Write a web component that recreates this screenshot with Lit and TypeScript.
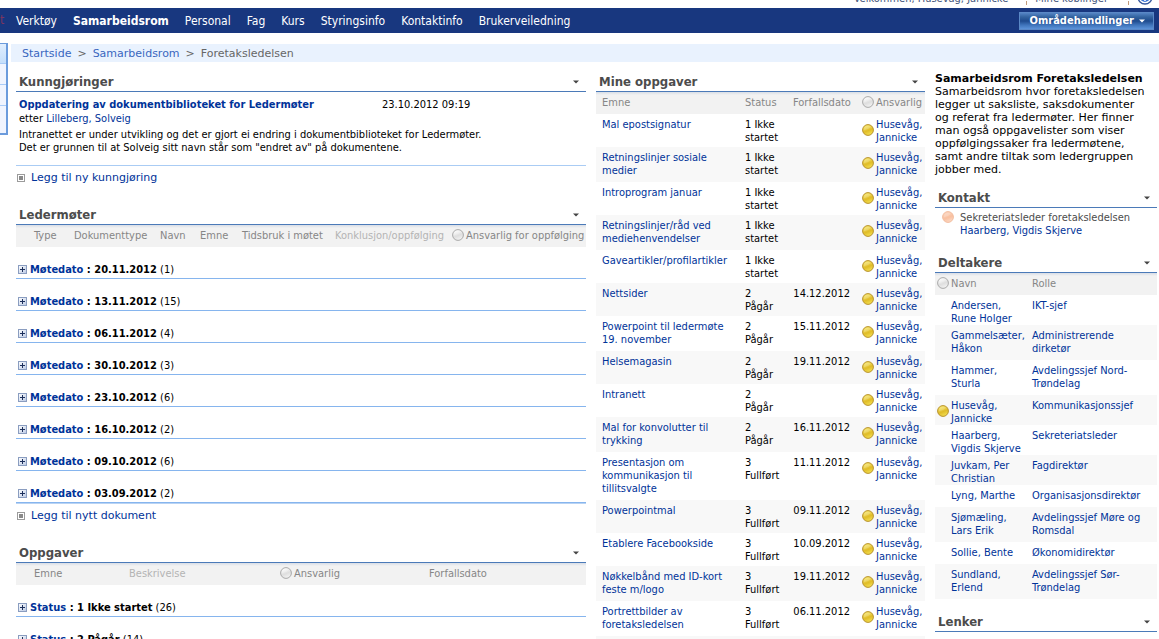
import { LitElement, html, svg, css, nothing } from "lit";
import { classMap } from "lit/directives/class-map.js";

type Tone = "gray" | "gold" | "peach";
interface Task { title: string; status: string; due?: string; }
interface Member { name: string; role: string; online?: boolean; }
interface Column { label?: string; width: number; muted?: boolean; person?: boolean; }

const NAV = ["Verktøy", "Samarbeidsrom", "Personal", "Fag", "Kurs", "Styringsinfo", "Kontaktinfo", "Brukerveiledning"];

const MEETINGS: [string, number][] = [
  ["20.11.2012", 1], ["13.11.2012", 15], ["06.11.2012", 4], ["30.10.2012", 3],
  ["23.10.2012", 6], ["16.10.2012", 2], ["09.10.2012", 6], ["03.09.2012", 2],
];
const STATUSES: [string, number][] = [["1 Ikke startet", 26], ["2 Pågår", 14]];

const MEETING_COLUMNS: Column[] = [
  { width: 12 }, { label: "Type", width: 40 }, { label: "Dokumenttype", width: 86 },
  { label: "Navn", width: 40 }, { label: "Emne", width: 42 }, { label: "Tidsbruk i møtet", width: 93 },
  { label: "Konklusjon/oppfølging", width: 117, muted: true },
  { label: "Ansvarlig for oppfølging", width: 140, person: true },
];
const TASK_COLUMNS: Column[] = [
  { width: 12 }, { label: "Emne", width: 95 }, { label: "Beskrivelse", width: 151, muted: true },
  { label: "Ansvarlig", width: 149, person: true }, { label: "Forfallsdato", width: 163 },
];

const NOT_STARTED = "1 Ikke\nstartet";
const RUNNING = "2\nPågår";
const DONE = "3\nFullført";
const MY_TASKS: Task[] = [
  { title: "Mal epostsignatur", status: NOT_STARTED },
  { title: "Retningslinjer sosiale\nmedier", status: NOT_STARTED },
  { title: "Introprogram januar", status: NOT_STARTED },
  { title: "Retningslinjer/råd ved\nmediehenvendelser", status: NOT_STARTED },
  { title: "Gaveartikler/profilartikler", status: NOT_STARTED },
  { title: "Nettsider", status: RUNNING, due: "14.12.2012" },
  { title: "Powerpoint til ledermøte\n19. november", status: RUNNING, due: "15.11.2012" },
  { title: "Helsemagasin", status: RUNNING, due: "19.11.2012" },
  { title: "Intranett", status: RUNNING },
  { title: "Mal for konvolutter til\ntrykking", status: RUNNING, due: "16.11.2012" },
  { title: "Presentasjon om\nkommunikasjon til\ntillitsvalgte", status: DONE, due: "11.11.2012" },
  { title: "Powerpointmal", status: DONE, due: "09.11.2012" },
  { title: "Etablere Facebookside", status: DONE, due: "10.09.2012" },
  { title: "Nøkkelbånd med ID-kort\nfeste m/logo", status: DONE, due: "19.11.2012" },
  { title: "Portrettbilder av\nforetaksledelsen", status: DONE, due: "06.11.2012" },
];
const MEMBERS: Member[] = [
  { name: "Andersen,\nRune Holger", role: "IKT-sjef" },
  { name: "Gammelsæter,\nHåkon", role: "Administrerende\ndirketør" },
  { name: "Hammer,\nSturla", role: "Avdelingssjef Nord-\nTrøndelag" },
  { name: "Husevåg,\nJannicke", role: "Kommunikasjonssjef", online: true },
  { name: "Haarberg,\nVigdis Skjerve", role: "Sekreteriatsleder" },
  { name: "Juvkam, Per\nChristian", role: "Fagdirektør" },
  { name: "Lyng, Marthe", role: "Organisasjonsdirektør" },
  { name: "Sjømæling,\nLars Erik", role: "Avdelingssjef Møre og\nRomsdal" },
  { name: "Sollie, Bente", role: "Økonomidirektør" },
  { name: "Sundland,\nErlend", role: "Avdelingssjef Sør-\nTrøndelag" },
];

const presence = (tone: Tone) => {
  const [edge, top, mid, low] = {
    gray: ["#a9a9a9", "#fafafa", "#dedede", "#f6f6f6"],
    gold: ["#b8922c", "#f6e468", "#e0bc28", "#f6e454"],
    peach: ["#f2bc9e", "#fbd3bb", "#f9c0a0", "#fcdcc9"],
  }[tone];
  return html`<svg class="presence" width="12" height="12" viewBox="0 0 12 12" aria-hidden="true">
    ${svg`<defs><linearGradient id="fill" x1="0.3" y1="0" x2="0.7" y2="1">
      <stop offset="0.1" stop-color=${top}/><stop offset="0.55" stop-color=${mid}/><stop offset="1" stop-color=${low}/>
    </linearGradient></defs>
    <circle cx="6" cy="6" r="5.4" fill="url(#fill)" stroke=${edge} stroke-width="1"/>
    <path d="M1.8 6.2A4.2 4.2 0 0 1 8.8 2.9Q6.5 5.6 1.8 6.2Z" fill="#fff" opacity="0.18"/>`}
  </svg>`;
};

const base = css`
  * { box-sizing: border-box; }
  a { color: #003399; text-decoration: none; }
  button { font: inherit; color: inherit; background: none; border: 0; padding: 0; margin: 0; cursor: pointer; }
  svg { display: block; flex: none; }
`;

class PresenceDot extends LitElement {
  static properties = { tone: { type: String } };
  tone: Tone = "gray";
  static styles = [base, css`:host { display: block; flex: none; height: 14px; width: 12px; }`];
  render() { return presence(this.tone); }
}
customElements.define("presence-dot", PresenceDot);

class PartTitle extends LitElement {
  static properties = { label: { type: String } };
  label = "";
  static styles = [base, css`
    :host { display: block; }
    .bar {
      display: flex; align-items: center; justify-content: space-between;
      height: 18px; padding: 0 7px 2px 3px; border-bottom: 1px solid #4b7ab8;
    }
    h2 { margin: 0; font-size: 13px; line-height: 15px; font-weight: bold; color: #4c4c4c; }
  `];
  render() {
    return html`<div class="bar"><h2>${this.label}</h2>
      <button type="button" aria-label="Meny">
        <svg width="6" height="4" viewBox="0 0 6 4"><path d="M0 0.5H6L3 3.5Z" fill="#444"/></svg>
      </button></div>`;
  }
}
customElements.define("part-title", PartTitle);

class AppRoot extends LitElement {
  static styles = [base, css`
    :host {
      display: block; height: 100vh; overflow: hidden; background: #fff; color: #000;
      font-family: "DejaVu Sans Condensed", "DejaVu Sans", sans-serif; font-size: 11px; line-height: 13px;
    }
    .wide { font-family: "DejaVu Sans", sans-serif; }

    .top {
      display: flex; justify-content: flex-end; align-items: flex-end; gap: 8px;
      height: 8px; padding: 0 6px 3px 0; overflow: hidden; color: #44557c;
    }
    .top a { color: inherit; white-space: nowrap; }
    .top .sep { width: 1px; height: 4px; background: #c29a7a; }
    .top .pad { width: 2px; }
    .top .wider { width: 4px; }

    .nav { display: flex; align-items: center; height: 25px; background: #18377f; color: #fff; font-size: 12px; line-height: 15px; }
    .nav .cut { width: 16px; color: #7d3560; }
    .nav ul { display: flex; gap: 16px; flex: 1; margin: 0; padding: 2px 0 0; list-style: none; }
    .nav a { color: #fff; }
    .nav a.current { font-weight: bold; }
    .actions {
      display: flex; align-items: center; gap: 5px; height: 18px; padding: 0 8px 0 10px; margin-right: 5px;
      border: 1px solid #5a88c6; font-size: 11px; font-weight: bold; color: #fff;
      background: linear-gradient(#5484c4 0%, #33639f 25%, #1f4b8e 50%, #3f74bb 75%, #5c92d8 100%);
    }

    .body { display: flex; align-items: flex-start; }
    .side {
      flex: none; width: 8px; margin: 10px 3px 0 0; border: 1px solid #6b9bdc; border-width: 1px 2px 2px 0;
      background: #f0f4fe;
    }
    .side i { display: block; height: 21px; border-bottom: 1px solid #a9cbf7; }
    .side i:first-child { height: 20px; background: linear-gradient(#e0eefe, #c5dffb); }
    .side i:last-child { height: 27px; border-bottom: 0; }
    main { flex: 1; min-width: 0; padding-top: 11px; }

    .crumbs { display: flex; align-items: center; gap: 6px; height: 18px; padding-left: 11px; background: #e9f2fe; color: #666; }
    .crumbs a { color: #3966bf; }

    .columns { display: grid; grid-template-columns: 570fr 329fr 222fr; gap: 10px; padding: 12px 2px 0 5px; align-items: start; }
    .columns > * { min-width: 0; }

    .news { display: grid; grid-template-columns: 363fr 204fr; padding: 6px 0 11px 3px; border-bottom: 1px solid #aaccf4; row-gap: 1px; white-space: nowrap; }
    .news a.head { font-weight: bold; }
    .news p { grid-column: 1 / -1; margin: 0; }
    .news .text { margin: 2px 0 0; white-space: pre-line; }

    .add { display: flex; align-items: center; gap: 6px; padding-left: 1px; height: 23px; margin-bottom: 18px; }
    .add .box { width: 8px; height: 8px; border: 1px solid #9b9b9b; padding: 1px; }
    .add .box::before { content: ""; display: block; width: 4px; height: 4px; background: #8a8a8a; }

    table { width: 100%; border-collapse: collapse; table-layout: fixed; }
    th {
      height: 22px; padding: 0 0 1px 6px; text-align: left; font-weight: normal; color: #868686; white-space: nowrap;
      background: linear-gradient(#d9dee6, #e9ebee 2px, #f2f2f2 3px);
    }
    th.muted { color: #b4b4b4; }
    td { padding: 4px 0 3px 6px; vertical-align: top; white-space: pre-line; }
    tr.alt td { background: #f8f8f8; }
    .who { display: flex; align-items: center; gap: 2px; }

    .groups { margin: 0; padding: 0; list-style: none; }
    .groups li { display: flex; align-items: flex-end; height: 32px; padding: 0 0 2px 2px; border-bottom: 1px solid #86b5ee; }
    .groups.closed { border-bottom: 1px solid #b9d3f3; }
    .groups button { display: flex; align-items: center; gap: 3px; line-height: 13px; }
    .groups b { white-space: pre; }
    .groups .key { color: #003399; }

    .my th.date { padding-left: 6px; }
    .my td.date { text-align: right; padding-right: 6px; }
    .my td.title { padding-bottom: 5px; }
    .my tr.single td.title { padding-bottom: 3px; }

    .intro { margin: -2px 0 14px; white-space: pre-line; }
    .intro b { white-space: nowrap; }
    .contact { display: flex; gap: 6px; padding: 3px 0 0 7px; margin-bottom: 18px; color: #4c4c4c; }
    .contact div { white-space: nowrap; }
    .members { margin-bottom: 15px; }
    .members th:first-child { padding-left: 2px; }
    .members td { padding-bottom: 5px; }
    .members td.name { padding: 4px 0 0 2px; }
    .members td.name .who.off { padding-left: 14px; }
  `];

  head(columns: Column[]) {
    const total = columns.reduce((sum, c) => sum + c.width, 0);
    return html`<table>
      <colgroup>${columns.map((c) => html`<col style="width:${(c.width / total) * 100}%">`)}</colgroup>
      <thead><tr>${columns.map((c) => html`<th scope="col" class=${classMap({ muted: !!c.muted })}>${c.person
        ? html`<span class="who"><presence-dot tone="gray"></presence-dot>${c.label}</span>` : c.label ?? nothing}</th>`)}</tr></thead>
    </table>`;
  }

  groups(key: string, rows: [string, number][], closed: boolean) {
    return html`<ul class=${classMap({ groups: true, closed })}>${rows.map(([value, count]) => html`<li>
      <button type="button" aria-expanded="false">
        <svg width="9" height="9" viewBox="0 0 9 9"><defs><linearGradient id="g" x2="1" y2="1"><stop stop-color="#fff"/><stop offset="1" stop-color="#b9c8e4"/></linearGradient></defs>
          <rect x="0.5" y="0.5" width="8" height="8" fill="url(#g)" stroke="#8a9dc0"/><path d="M2 4.5H7M4.5 2V7" stroke="#1c2f5c"/></svg>
        <span><b><span class="key">${key}</span> : ${value}</b> (${count})</span>
      </button></li>`)}</ul>`;
  }

  add(label: string) {
    return html`<div class="add wide"><span class="box"></span><a href="#">${label}</a></div>`;
  }

  render() {
    return html`
      <div class="top">
        <a href="#">Velkommen, Husevåg, Jannicke</a><span class="pad"></span><span class="sep"></span>
        <a href="#">Mine koblinger</a><span class="wider"></span><span class="sep"></span>
        <svg width="16" height="16" viewBox="0 0 16 16"><circle cx="8" cy="8" r="7" fill="#fff" stroke="#35569c" stroke-width="1.4"/><circle cx="8" cy="8" r="5" fill="#3f78d8"/><path d="M8 6.5V10M8 11V12" stroke="#fff" stroke-width="1.6"/></svg>
      </div>
      <nav class="nav">
        <span class="cut">t</span>
        <ul>${NAV.map((n) => html`<li><a href="#" class=${classMap({ current: n === "Samarbeidsrom" })}>${n}</a></li>`)}</ul>
        <button type="button" class="actions">Områdehandlinger
          <svg width="6" height="4" viewBox="0 0 6 4"><path d="M0 0.5H6L3 3.5Z" fill="#fff"/></svg></button>
      </nav>
      <div class="body">
        <div class="side"><i></i><i></i><i></i><i></i></div>
        <main>
          <div class="crumbs wide"><a href="#">Startside</a><span>&gt;</span><a href="#">Samarbeidsrom</a><span>&gt;</span><span>Foretaksledelsen</span></div>
          <div class="columns">
            <div>
              <part-title label="Kunngjøringer"></part-title>
              <div class="news">
                <a class="head" href="#">Oppdatering av dokumentbiblioteket for Ledermøter</a><span>23.10.2012 09:19</span>
                <p>etter <a href="#">Lilleberg, Solveig</a></p>
                <p class="text">Intranettet er under utvikling og det er gjort ei endring i dokumentbiblioteket for Ledermøter.${"\n"}Det er grunnen til at Solveig sitt navn står som "endret av" på dokumentene.</p>
              </div>
              ${this.add("Legg til ny kunngjøring")}
              <part-title label="Ledermøter"></part-title>
              ${this.head(MEETING_COLUMNS)}
              ${this.groups("Møtedato", MEETINGS, true)}
              ${this.add("Legg til nytt dokument")}
              <part-title label="Oppgaver"></part-title>
              ${this.head(TASK_COLUMNS)}
              ${this.groups("Status", STATUSES, false)}
            </div>
            <div>
              <part-title label="Mine oppgaver"></part-title>
              <table class="my">
                <colgroup><col style="width:${14300 / 329}%"><col style="width:${4800 / 329}%"><col style="width:${6900 / 329}%"><col style="width:${6900 / 329}%"></colgroup>
                <thead><tr><th scope="col">Emne</th><th scope="col">Status</th><th scope="col" class="date">Forfallsdato</th>
                  <th scope="col"><span class="who"><presence-dot tone="gray"></presence-dot>Ansvarlig</span></th></tr></thead>
                <tbody>${MY_TASKS.map((t, i) => html`<tr class=${classMap({ alt: i % 2 === 1, single: !t.title.includes("\n") })}>
                  <td class="title"><a href="#">${t.title}</a></td><td>${t.status}</td><td class="date">${t.due ?? nothing}</td>
                  <td><div class="who"><presence-dot tone="gold"></presence-dot><a href="#">${"Husevåg,\nJannicke"}</a></div></td></tr>`)}
                  <tr class="alt"><td class="title">&nbsp;</td><td></td><td></td><td></td></tr></tbody>
              </table>
            </div>
            <div>
              <p class="intro wide"><b>Samarbeidsrom Foretaksledelsen</b>${"\nSamarbeidsrom hvor foretaksledelsen\nlegger ut saksliste, saksdokumenter\nog referat fra ledermøter. Her finner\nman også oppgavelister som viser\noppfølgingssaker fra ledermøtene,\nsamt andre tiltak som ledergruppen\njobber med."}</p>
              <part-title label="Kontakt"></part-title>
              <div class="contact"><presence-dot tone="peach"></presence-dot><div>Sekreteriatsleder foretaksledelsen<br><a href="#">Haarberg, Vigdis Skjerve</a></div></div>
              <part-title label="Deltakere"></part-title>
              <table class="members">
                <colgroup><col style="width:${9100 / 222}%"><col></colgroup>
                <thead><tr><th scope="col"><span class="who"><presence-dot tone="gray"></presence-dot>Navn</span></th><th scope="col">Rolle</th></tr></thead>
                <tbody>${MEMBERS.map((m, i) => html`<tr class=${classMap({ alt: i % 2 === 1 })}>
                  <td class="name"><div class=${classMap({ who: true, off: !m.online })}>${m.online ? html`<presence-dot tone="gold"></presence-dot>` : nothing}<a href="#">${m.name}</a></div></td>
                  <td><a href="#">${m.role}</a></td></tr>`)}</tbody>
              </table>
              <part-title label="Lenker"></part-title>
            </div>
          </div>
        </main>
      </div>`;
  }
}
customElements.define("app-root", AppRoot);
